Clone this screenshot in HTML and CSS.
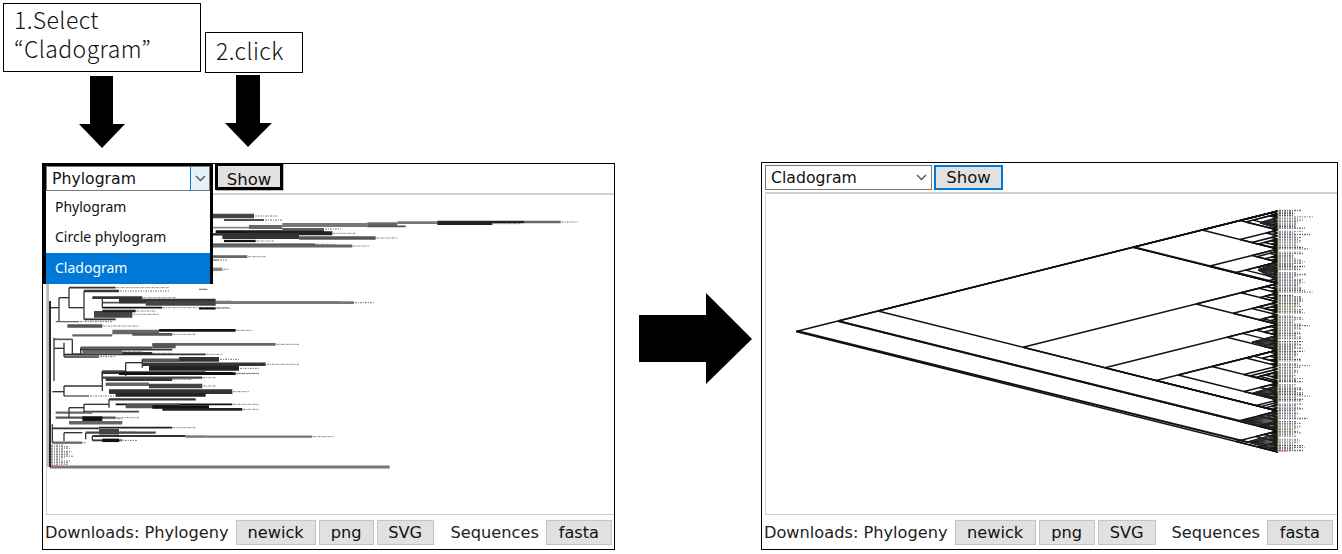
FILE: index.html
```html
<!DOCTYPE html>
<html lang="en">
<head>
    <meta charset="UTF-8">
    <title>Phylogeny viewer: switching to cladogram</title>
    <link rel="stylesheet" href="styles.css">
</head>
<body>
    <div class="page">
        <!-- Before: instructions and phylogram -->
        <div class="steps">
            <div class="callouts">
                <div class="callout callout-select">1.Select<br>“Cladogram”</div>
                <div class="callout callout-click">2.click</div>
            </div>
            <svg class="down-arrows" width="300" height="91" viewBox="3 72 300 91">
                <polygon points="90,76 113,76 113,124 125,124 102,148 79,124 90,124"/>
                <polygon points="236,75 260,75 260,123 272,123 248,147 225,123 236,123"/>
            </svg>
            <div class="panel panel-before">
                <div class="toolbar">
                    <div class="select">
                        <span>Phylogram</span>
                        <span class="select-arrow open">
                            <svg width="11" height="7" viewBox="0 0 11 7"><path d="M1 1l4.500 4.500L10 1"/></svg>
                        </span>
                    </div>
                    <button class="show-btn marked">Show</button>
                </div>
                <div class="dropdown">
                    <div class="dropdown-item">Phylogram</div>
                    <div class="dropdown-item">Circle phylogram</div>
                    <div class="dropdown-item active">Cladogram</div>
                </div>
                <div class="tree-frame">
                    <svg id="phylogram" width="570" height="322" viewBox="47 192 570 322"></svg>
                </div>
                <div class="downloads">
                    <span class="dl-label">Downloads: Phylogeny</span>
                    <button class="dl-btn btn-newick">newick</button>
                    <button class="dl-btn btn-png">png</button>
                    <button class="dl-btn btn-svg">SVG</button>
                    <span class="dl-label seq-label">Sequences</span>
                    <button class="dl-btn btn-fasta">fasta</button>
                </div>
            </div>
        </div>

        <svg class="big-arrow" width="113" height="91" viewBox="0 0 113 91">
            <polygon points="0,22 67,22 67,0 113,46 67,91 67,69 0,69"/>
        </svg>

        <!-- After: cladogram -->
        <div class="panel panel-after">
            <div class="toolbar">
                <div class="select select-closed">
                    <span>Cladogram</span>
                    <span class="select-arrow">
                        <svg width="11" height="7" viewBox="0 0 11 7"><path d="M1 1l4.500 4.500L10 1"/></svg>
                    </span>
                </div>
                <button class="show-btn focused">Show</button>
            </div>
            <div class="tree-frame">
                <svg id="cladogram" width="572" height="322" viewBox="765 192 572 322"></svg>
            </div>
            <div class="downloads">
                <span class="dl-label">Downloads: Phylogeny</span>
                <button class="dl-btn btn-newick">newick</button>
                <button class="dl-btn btn-png">png</button>
                <button class="dl-btn btn-svg">SVG</button>
                <span class="dl-label seq-label">Sequences</span>
                <button class="dl-btn btn-fasta">fasta</button>
            </div>
        </div>
    </div>

    <script src="tree.js"></script>
</body>
</html>
```

FILE: styles.css
```css
* {
    box-sizing: border-box;
    margin: 0;
    padding: 0;
}

body {
    background-color: #fff;
    color: #000;
    font-family: "DejaVu Sans", Verdana, sans-serif;
    overflow: hidden;
}

.page {
    display: flex;
    align-items: flex-start;
    width: 1342px;
    height: 554px;
}

/* Left side: callouts, arrows, first panel */
.steps {
    flex: 0 0 615px;
    padding: 3px 0 0 3px;
}

.callouts {
    display: flex;
    align-items: flex-start;
    gap: 4px;
    height: 69px;
}

.callout {
    border: 1px solid #000;
    background: #fff;
    color: #111;
    font-family: "Noto Sans CJK JP", "Noto Sans", sans-serif;
    font-weight: 300;
    font-size: 23px;
    line-height: 29px;
    letter-spacing: 0.4px;
}

.callout-select {
    width: 198px;
    height: 69px;
    padding: 1px 0 0 10px;
}

.callout-click {
    width: 98px;
    height: 41px;
    margin-top: 29px;
    padding: 3px 0 0 10px;
}

.down-arrows {
    display: block;
}

.panel {
    position: relative;
    display: flex;
    flex-direction: column;
    background: #fff;
    border: 1px solid #000;
}

.panel-before {
    width: 573px;
    height: 387px;
    margin-left: 39px;
    padding: 2px 0 0 3px;
}

.panel-after {
    width: 577px;
    height: 388px;
    margin: 162px 0 0 9px;
    padding: 2px 0 0 3px;
}

.big-arrow {
    margin: 293px 0 0 24px;
}

/* Toolbar */
.toolbar {
    display: flex;
    gap: 2px;
    height: 25px;
}

.select {
    display: flex;
    align-items: center;
    justify-content: space-between;
    position: relative;
    z-index: 3;
    width: 164px;
    height: 25px;
    padding-left: 5px;
    background: #fff;
    border: 1px solid #7a7a7a;
    font-size: 15.700px;
    color: #111;
}

.select-arrow {
    display: flex;
    align-items: center;
    justify-content: center;
    width: 19px;
    height: 23px;
}

.select-arrow.open {
    background: #e5f1fb;
    border-left: 1px solid #0078d7;
}

.select-arrow svg {
    fill: none;
    stroke: #555;
    stroke-width: 1.4;
}

.select-closed {
    width: 167px;
}

.show-btn {
    width: 69px;
    height: 25px;
    background: #e1e1e1;
    border: 1px solid #adadad;
    font-family: inherit;
    font-size: 16.500px;
    color: #111;
}

.show-btn.marked {
    position: relative;
    z-index: 3;
    width: 68px;
    height: 27px;
    margin: -3px 0 0 3px;
    border: 3px solid #000;
    box-shadow: 1px 1px 0 #bbb;
    padding-top: 4px;
}

.show-btn.focused {
    border: 2px solid #0078d7;
}

/* Open dropdown with the black marker round it */
.dropdown {
    position: absolute;
    z-index: 2;
    left: 0;
    top: 0;
    width: 170px;
    height: 120px;
    padding-top: 25px;
    background: #fff;
    border: 3px solid #000;
}

.dropdown-item {
    height: 30px;
    padding: 6px 0 0 9px;
    font-family: "Noto Sans", sans-serif;
    font-size: 14px;
    line-height: 18px;
    color: #111;
}

.dropdown-item.active {
    height: 31px;
    margin-top: 1px;
    padding-top: 6px;
    background: #0078d7;
    color: #fff;
}

/* Tree area */
.tree-frame {
    flex: 1;
    min-height: 0;
    margin-top: 2px;
    border: 1px solid #d0d0d0;
    border-top-width: 2px;
    border-right-width: 0;
    overflow: hidden;
}

.tree-frame svg {
    display: block;
    margin: -2px 0 0 -1px;
}

/* Download row */
.downloads {
    display: flex;
    align-items: center;
    height: 34px;
    flex: 0 0 34px;
    padding: 1px 0 0 0;
    margin-left: -1px;
    font-size: 16.200px;
    color: #222;
}

.dl-label {
    white-space: nowrap;
}

.dl-btn {
    height: 25px;
    background: #e1e1e1;
    border: 1px solid #c4c4c4;
    font-family: inherit;
    font-size: 16.200px;
    color: #111;
}

.btn-newick {
    flex: 0 0 80px;
    margin-left: 7px;
}

.btn-png {
    flex: 0 0 55px;
    margin-left: 3px;
}

.btn-svg {
    flex: 0 0 57px;
    margin-left: 3px;
}

.seq-label {
    margin-left: 17px;
}

.btn-fasta {
    flex: 0 0 66px;
    margin-left: 7px;
}

.panel-after .btn-newick {
    flex-basis: 81px;
}

.panel-after .btn-png {
    flex-basis: 56px;
}

.panel-after .btn-svg {
    flex-basis: 58px;
}

.panel-after .seq-label {
    margin-left: 16px;
}
```

FILE: tree.js
```js
// Draws the two trees. Coordinates are page pixels, the svg viewBoxes match.
const SVG_NS = 'http://www.w3.org/2000/svg';

// small seeded random so every run draws the same labels
let seed = 7;
function rnd() {
    seed = (seed * 16807) % 2147483647;
    return seed / 2147483647;
}

function line(svg, x1, y1, x2, y2, width, color, dash) {
    const el = document.createElementNS(SVG_NS, 'line');
    el.setAttribute('x1', x1);
    el.setAttribute('y1', y1);
    el.setAttribute('x2', x2);
    el.setAttribute('y2', y2);
    el.setAttribute('stroke', color);
    el.setAttribute('stroke-width', width);
    if (dash) el.setAttribute('stroke-dasharray', dash);
    svg.appendChild(el);
}

// ---- Cladogram ----
const LEAF_X = 1278;
const SLOPE_X = 2; // apex sits 2px left of the leaves per px of leaf range
const cladogram = document.getElementById('cladogram');

function drawClade(top, bottom, splits) {
    const x = LEAF_X - SLOPE_X * (bottom - top);
    const y = (top + bottom) / 2;
    line(cladogram, x, y, LEAF_X, top, 1.5, '#111');
    line(cladogram, x, y, LEAF_X, bottom, 1.5, '#111');
    if (bottom - top < 3.2) return;

    let mid = splits[0];
    const upper = splits[1] || [];
    const lower = splits[2] || [];
    if (mid === undefined) {
        // ladder-like split for the small clades
        const range = bottom - top;
        const part = range < 8 ? 0.5 : 0.15 + rnd() * 0.25;
        mid = rnd() > 0.5 ? top + range * part : bottom - range * part;
    }
    drawClade(top, mid, upper);
    drawClade(mid, bottom, lower);
}

// [split, upper clade, lower clade], read off the reference
drawClade(211, 452, [431,
    [411,
        [283.5,
            [249, [230], [262]],
            [324.5,
                [302, [293], [315]],
                [350,
                    [],
                    [400, [383, [366], [392]], []]
                ]
            ]
        ],
        [421]
    ],
    [442]
]);

// Dark hatched triangles: many leaves off one apex
function fan(x, y, top, bottom) {
    for (let leaf = top; leaf <= bottom; leaf += 1.5) {
        line(cladogram, x, y, LEAF_X, leaf, 1, '#222');
    }
}
fan(1247, 442, 433, 452);
fan(1240, 421, 412, 431);
fan(1253, 393, 385, 400);
fan(1252, 342, 335, 350);
fan(1260, 223, 217, 229);
fan(1258, 270, 262, 282);

// The long edges that read heavier than the rest
line(cladogram, 838, 321, 1240, 421, 2.2, '#111');
line(cladogram, 797, 331, 1247, 442, 1.9, '#111');
line(cladogram, 1133, 247, 1278, 283, 1.9, '#111');

const labelColors = ['#777', '#8a8a78', '#6c6c80', '#999', '#555'];
for (let y = 210.5; y < 452; y += 1.6) {
    const gap = [229.5, 250, 271, 293, 314, 340, 362, 383, 403, 420, 438];
    if (gap.some(g => Math.abs(g - y) < 0.8)) continue;
    const width = 14 + rnd() * 12 + (rnd() > 0.92 ? 8 : 0);
    line(cladogram, LEAF_X + 1, y, LEAF_X + 1 + width, y, 1.3,
        labelColors[Math.floor(rnd() * labelColors.length)], '2 1 1 1');
}
line(cladogram, LEAF_X, 210, LEAF_X, 452, 1, '#99a070');
line(cladogram, LEAF_X, 451, LEAF_X + 9, 451, 1.4, '#f08080');

// ---- Phylogram ----
const phylogram = document.getElementById('phylogram');

// Segments: x1, x2, y, width, colour, label length (all in 3x crop units)
function drawSegments(originX, originY, segments) {
    segments.forEach(s => {
        const x1 = originX + s[0] / 3;
        const x2 = originX + s[1] / 3;
        const y = originY + s[2] / 3;
        line(phylogram, x1, y, x2, y, (s[3] || 1.2) * 1.15, s[4] || '#333');
        if (s[5]) {
            line(phylogram, x2 + 1, y, x2 + s[5] / 3, y, 1, '#777', '2 1 1 1');
        }
    });
}

// Connectors: x, y1, y2
function drawConnectors(originX, originY, connectors) {
    connectors.forEach(c => {
        const x = originX + c[0] / 3;
        line(phylogram, x, originY + c[1] / 3, x, originY + c[2] / 3, 1.3, '#333');
    });
}

// Upper part, right of the open menu
drawSegments(200, 190, [
    [40, 165, 75, 4, '#444', 70],
    [75, 195, 87, 1.4, '#111', 55],
    [40, 150, 110, 1.5, '#888'],
    [150, 250, 108, 3.5, '#666'],
    [250, 505, 102, 3.5, '#777'],
    [505, 595, 100, 3.5, '#666'],
    [595, 715, 95, 2.5, '#777'],
    [715, 975, 93, 2, '#222'],
    [975, 1085, 93, 2, '#666', 50],
    [715, 880, 98, 2.5, '#222', 85],
    [505, 620, 106, 1.5, '#555'],
    [250, 375, 114, 1.5, '#222', 50],
    [50, 375, 122, 2.5, '#111'],
    [135, 400, 127, 3.5, '#222', 70],
    [40, 135, 130, 2, '#222'],
    [70, 300, 135, 5, '#333'],
    [300, 530, 141, 3, '#555', 65],
    [75, 170, 150, 2, '#111', 55],
    [40, 350, 160, 1.5, '#444', 60],
    [40, 460, 165, 2.5, '#666', 50],
    [40, 145, 197, 2.5, '#666', 55],
    [40, 60, 207, 1, '#666', 25],
    [40, 70, 235, 3, '#888', 20],
    [0, 25, 295, 1, '#777'],
    [0, 45, 335, 4, '#444'],
    [45, 465, 335, 2.5, '#777', 60],
    [0, 50, 352, 2, '#000', 45]
]);

// Middle part
drawSegments(40, 190, [
    [33, 60, 350], [60, 90, 320],
    [90, 230, 290, 1.4, '#333', 160],
    [90, 135, 350],
    [135, 240, 300, 2, '#333', 150],
    [160, 310, 320, 2.5, '#333', 100],
    [190, 320, 335, 1.4, '#555'],
    [240, 530, 330, 4, '#333', 50],
    [320, 530, 337, 4, '#444', 50],
    [530, 900, 335, 2.5, '#777'],
    [190, 370, 350, 1.6, '#111', 200],
    [165, 280, 370, 6, '#444', 80],
    [190, 290, 360, 2, '#222', 60],
    [135, 230, 385, 1.6, '#333'],
    [50, 120, 392, 1, '#555', 100],
    [85, 190, 405, 3, '#555', 110],
    [45, 100, 445, 1.4, '#555'],
    [100, 220, 433, 2, '#666'],
    [220, 360, 423, 4, '#666'],
    [360, 590, 418, 2.5, '#111', 50],
    [280, 400, 430, 2.5, '#555', 70],
    [45, 75, 472], [75, 125, 490],
    [125, 340, 470, 2, '#555'],
    [340, 710, 460, 2.5, '#666', 70],
    [340, 410, 465, 4, '#555'],
    [125, 400, 476, 1.6, '#333'],
    [130, 250, 482, 3, '#666', 60],
    [250, 340, 487, 2, '#111', 60],
    [100, 500, 490, 1.6, '#333', 50],
    [75, 180, 497, 2.5, '#666', 50],
    [190, 260, 540], [260, 310, 515],
    [310, 420, 508, 3, '#555'],
    [420, 540, 505, 4, '#333', 60],
    [310, 680, 520, 3, '#333', 100],
    [330, 600, 532, 4, '#222', 60],
    [260, 580, 547, 2.5, '#111', 80],
    [200, 400, 565, 3, '#333', 60]
]);
drawConnectors(40, 190, [
    [60, 320, 390], [90, 290, 350], [135, 300, 385], [190, 320, 350],
    [45, 440, 570], [75, 455, 497], [100, 445, 490], [125, 470, 490],
    [190, 540, 570], [260, 515, 555], [310, 505, 530]
]);

// Lower part
drawSegments(40, 370, [
    [190, 500, 5, 2.5, '#333'],
    [240, 590, 8, 2.5, '#111', 70],
    [190, 490, 20, 2, '#444', 40],
    [200, 330, 40, 3, '#666'],
    [330, 490, 45, 4, '#444', 40],
    [210, 580, 62, 4, '#333', 50],
    [230, 500, 72, 3, '#222'],
    [40, 75, 62],
    [75, 190, 45],
    [75, 150, 75, 1.2, '#555', 80],
    [210, 470, 85, 2, '#333'],
    [135, 210, 100],
    [230, 580, 100, 1.5, '#111', 80],
    [260, 420, 105, 4, '#555'],
    [340, 510, 108, 3, '#111'],
    [370, 610, 115, 2.5, '#222', 50],
    [90, 135, 110],
    [135, 300, 122, 1.4, '#444'],
    [50, 160, 125, 2, '#666'],
    [50, 230, 140, 2, '#555', 70],
    [130, 190, 143, 4, '#111', 60],
    [90, 250, 155, 3, '#666'],
    [40, 180, 172, 1.4, '#333'],
    [180, 400, 170, 1.6, '#222', 70],
    [75, 130, 185],
    [140, 350, 185, 2, '#444'],
    [180, 240, 182, 5, '#444', 50],
    [160, 440, 195, 1.6, '#333', 60],
    [440, 820, 197, 2, '#777', 65],
    [160, 250, 208, 1.6, '#333'],
    [190, 240, 208, 3, '#111', 55],
    [40, 130, 215, 2, '#666', 10],
    [33, 1052, 288, 2.4, '#777']
]);
drawConnectors(40, 370, [
    [190, 0, 60], [75, 45, 75], [210, 85, 110], [135, 100, 125], [90, 110, 140],
    [40, 160, 215], [75, 185, 210], [140, 185, 205], [160, 195, 208]
]);

// Root stem and the block of short labels at the bottom
line(phylogram, 49, 190, 49, 466, 2, '#bbb');
line(phylogram, 51, 300, 51, 466, 1.8, '#111');
for (let y = 444; y < 464; y += 1.6) {
    const width = 10 + rnd() * 13;
    line(phylogram, 52, y, 52 + width, y, 1, '#777', '2 1 1 1');
}
line(phylogram, 52, 464.5, 59, 464.5, 1.2, '#f08080');
```
